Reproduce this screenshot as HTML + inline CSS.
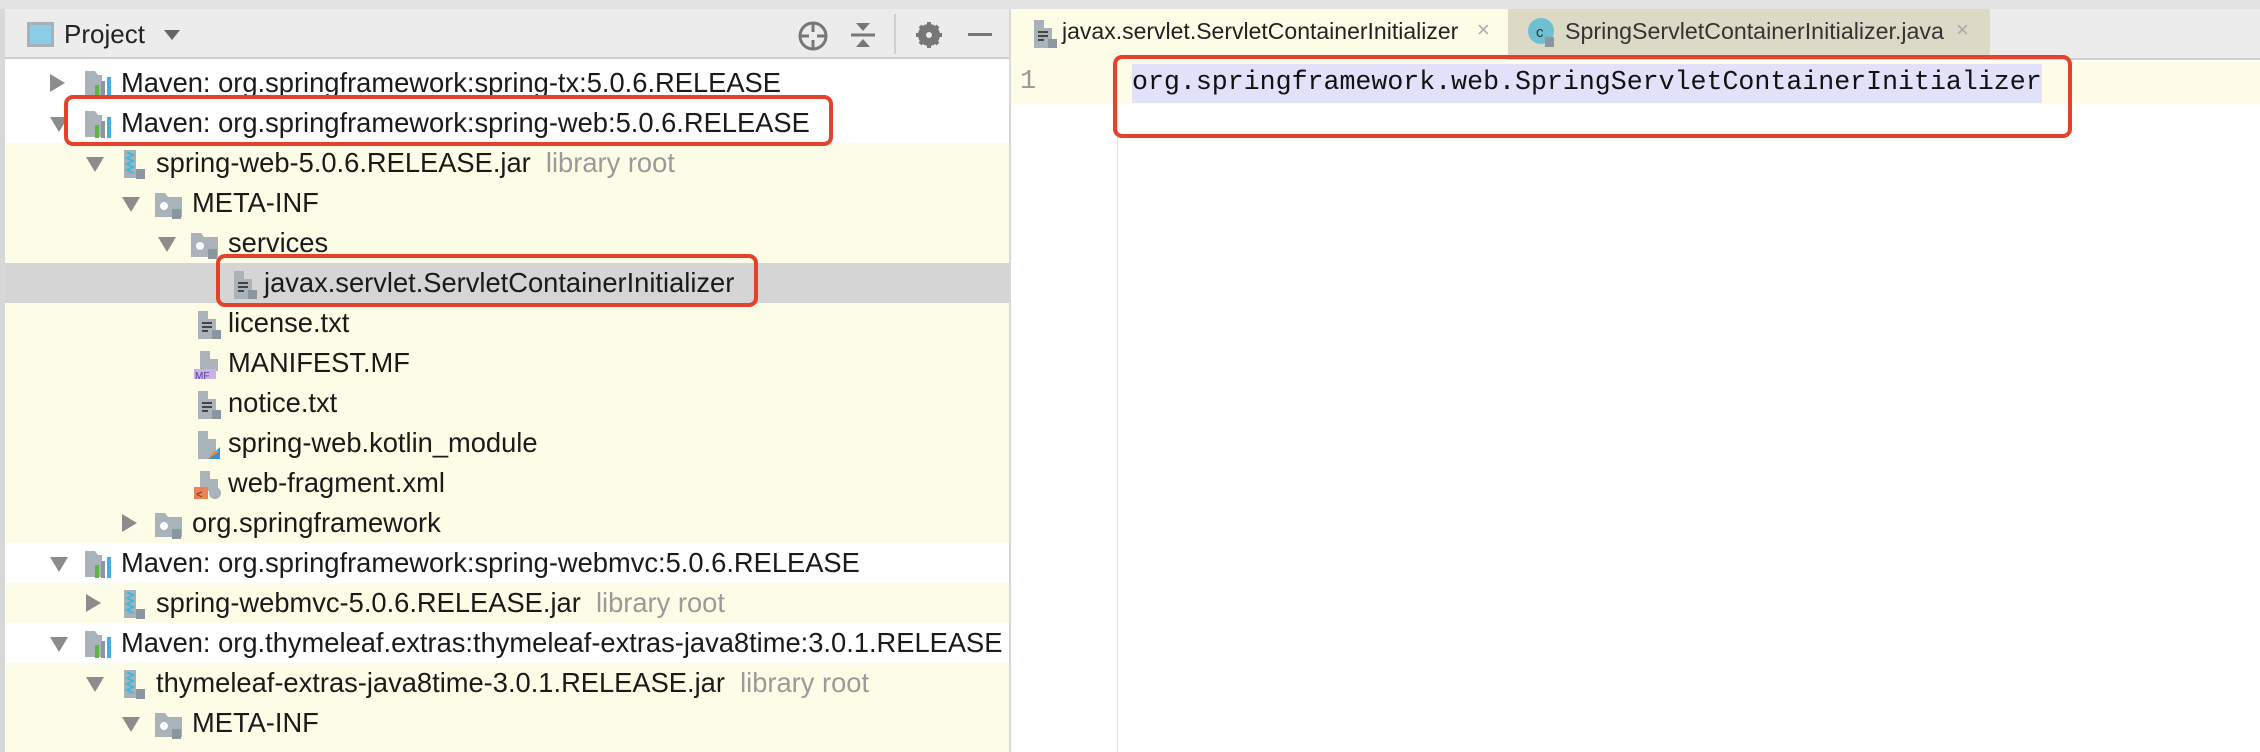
<!DOCTYPE html>
<html><head><meta charset="utf-8">
<style>
*{margin:0;padding:0;box-sizing:border-box}
body{width:2260px;height:752px;overflow:hidden;background:#fff;font-family:"Liberation Sans",sans-serif;position:relative;color:#1a1a1a}
.abs{position:absolute}
.row{position:absolute;left:5px;width:1004px;height:40px}
.y{background:#fdfde7}
.sel{background:#d5d5d5}
.g{color:#9a9a9a}
.arr{position:absolute;width:0;height:0}
.ad{border-left:9px solid transparent;border-right:9px solid transparent;border-top:15px solid #8c8c8c;top:14px}
.ar{border-top:9px solid transparent;border-bottom:9px solid transparent;border-left:15px solid #8c8c8c;top:11px}
.ic{position:absolute;top:6px;width:30px;height:30px}
.red{position:absolute;border:4px solid #e5412b;border-radius:9px}
.tx{position:absolute;font-size:27.3px;white-space:nowrap}
</style></head><body>
<div class="abs" style="left:0;top:0;width:2260px;height:9px;background:#e3e3e3"></div>
<div class="abs" style="left:0;top:9px;width:1009px;height:50px;background:#ececec;border-bottom:2px solid #d0d0d0"></div>
<div class="abs" style="left:0;top:9px;width:5px;height:743px;background:#d8d8d8"></div>
<div class="abs" style="left:27px;top:22px;width:27px;height:25px;background:#8ccce8;border:3px solid #a8b0b8"></div>
<div class="abs" style="left:64px;top:19px;font-size:26px;color:#222">Project</div>
<div class="arr abs" style="left:164px;top:30px;border-left:8px solid transparent;border-right:8px solid transparent;border-top:10px solid #666"></div>
<svg class="abs" style="left:795px;top:18px" width="36" height="36" viewBox="0 0 36 36"><circle cx="18" cy="18" r="13" fill="none" stroke="#777" stroke-width="3"/><path d="M18 5v9M18 22v9M5 18h9M22 18h9" stroke="#777" stroke-width="3"/></svg>
<svg class="abs" style="left:848px;top:20px" width="30" height="30" viewBox="0 0 30 30"><path d="M8 3h14l-7 8z M8 27h14l-7-8z" fill="#777"/><path d="M3 15h24" stroke="#777" stroke-width="3"/></svg>
<div class="abs" style="left:894px;top:14px;width:2px;height:40px;background:#d0d0d0"></div>
<svg class="abs" style="left:914px;top:20px" width="30" height="30" viewBox="0 0 30 30"><circle cx="15" cy="15" r="8" fill="none" stroke="#777" stroke-width="6"/><path d="M15 2v26M2 15h26M6 6l18 18M24 6L6 24" stroke="#777" stroke-width="4"/><circle cx="15" cy="15" r="3" fill="#ececec"/></svg>
<div class="abs" style="left:968px;top:33px;width:24px;height:3px;background:#777"></div>
<div class="abs" style="left:1009px;top:9px;width:2px;height:743px;background:#d8d8d8"></div>

<div class="row" style="top:63px"></div>
<div class="arr ar abs" style="left:50px;top:74px"></div>
<div class="tx" style="left:121px;top:67px">Maven: org.springframework:spring-tx:5.0.6.RELEASE</div>

<div class="row" style="top:103px"></div>
<div class="row y" style="top:143px;height:200px"></div>
<div class="row sel" style="top:263px"></div>
<div class="row y" style="top:303px;height:240px"></div>
<div class="row y" style="top:583px"></div>
<div class="row y" style="top:663px;height:89px"></div>

<svg width="0" height="0" style="position:absolute"><defs>
<g id="mvn"><path d="M2 3h10l3 4h4v22H2z" fill="#aab2ba"/><rect x="12" y="17" width="4" height="13" fill="#5bb548"/><rect x="18" y="13" width="4" height="17" fill="#8a96a0"/><rect x="24" y="9" width="4" height="21" fill="#3fb0e0"/></g>
<g id="jar"><rect x="6" y="1" width="12" height="28" fill="#a8b0b8"/><path d="M9 3l6 3-6 3 6 3-6 3 6 3-6 3 6 3" stroke="#40b8d8" stroke-width="2" fill="none"/><rect x="18" y="20" width="9" height="10" fill="#8a96a0"/></g>
<g id="fold"><path d="M1 4h10l3 4h14v20H1z" fill="#aab2ba"/><circle cx="10" cy="17" r="4" fill="#fff"/><rect x="18" y="20" width="9" height="10" fill="#8a96a0"/></g>
<g id="txt"><path d="M4 2h10v8h8v20H4z" fill="#aab2ba"/><path d="M8 14h10M8 18h10M8 22h6" stroke="#444" stroke-width="2"/><rect x="18" y="21" width="9" height="9" fill="#8a96a0"/></g>
</defs></svg>

<svg class="ic abs" style="left:83px;top:68px"><use href="#mvn"/></svg>
<svg class="ic abs" style="left:83px;top:108px"><use href="#mvn"/></svg>
<div class="arr ad abs" style="left:50px;top:117px"></div>
<div class="tx" style="left:121px;top:107px">Maven: org.springframework:spring-web:5.0.6.RELEASE</div>

<div class="arr ad abs" style="left:86px;top:157px"></div>
<svg class="ic abs" style="left:118px;top:149px"><use href="#jar"/></svg>
<div class="tx" style="left:156px;top:147px">spring-web-5.0.6.RELEASE.jar <span class="g">&nbsp;library root</span></div>

<div class="arr ad abs" style="left:122px;top:197px"></div>
<svg class="ic abs" style="left:154px;top:189px"><use href="#fold"/></svg>
<div class="tx" style="left:192px;top:187px">META-INF</div>

<div class="arr ad abs" style="left:158px;top:237px"></div>
<svg class="ic abs" style="left:190px;top:229px"><use href="#fold"/></svg>
<div class="tx" style="left:228px;top:227px">services</div>

<svg class="ic abs" style="left:230px;top:269px"><use href="#txt"/></svg>
<div class="tx" style="left:264px;top:267px">javax.servlet.ServletContainerInitializer</div>

<svg class="ic abs" style="left:194px;top:309px"><use href="#txt"/></svg>
<div class="tx" style="left:228px;top:307px">license.txt</div>

<svg class="ic abs" style="left:194px;top:349px"><path d="M6 2h10v8h8v12H6z" fill="#aab2ba"/><rect x="0" y="20" width="22" height="11" fill="#c7b3ea"/><text x="1" y="30" font-size="10" font-family="Liberation Sans" fill="#5a3c8c">MF</text></svg>
<div class="tx" style="left:228px;top:347px">MANIFEST.MF</div>

<svg class="ic abs" style="left:194px;top:389px"><use href="#txt"/></svg>
<div class="tx" style="left:228px;top:387px">notice.txt</div>

<svg class="ic abs" style="left:194px;top:429px"><path d="M4 2h10v8h8v20H4z" fill="#aab2ba"/><path d="M14 30l12-12v12z" fill="#3f8fd8"/><path d="M14 30l6-8 6 0z" fill="#f08b2c"/></svg>
<div class="tx" style="left:228px;top:427px">spring-web.kotlin_module</div>

<svg class="ic abs" style="left:194px;top:469px"><path d="M6 2h10v8h8v12H6z" fill="#aab2ba"/><rect x="0" y="18" width="14" height="12" fill="#f08050"/><text x="2" y="29" font-size="11" fill="#333">&lt;</text><circle cx="21" cy="24" r="6" fill="#aab2ba"/></svg>
<div class="tx" style="left:228px;top:467px">web-fragment.xml</div>

<div class="arr ar abs" style="left:122px;top:514px"></div>
<svg class="ic abs" style="left:154px;top:509px"><use href="#fold"/></svg>
<div class="tx" style="left:192px;top:507px">org.springframework</div>

<div class="arr ad abs" style="left:50px;top:557px"></div>
<svg class="ic abs" style="left:83px;top:548px"><use href="#mvn"/></svg>
<div class="tx" style="left:121px;top:547px">Maven: org.springframework:spring-webmvc:5.0.6.RELEASE</div>

<div class="arr ar abs" style="left:86px;top:594px"></div>
<svg class="ic abs" style="left:118px;top:589px"><use href="#jar"/></svg>
<div class="tx" style="left:156px;top:587px">spring-webmvc-5.0.6.RELEASE.jar <span class="g">&nbsp;library root</span></div>

<div class="arr ad abs" style="left:50px;top:637px"></div>
<svg class="ic abs" style="left:83px;top:628px"><use href="#mvn"/></svg>
<div class="tx" style="left:121px;top:627px">Maven: org.thymeleaf.extras:thymeleaf-extras-java8time:3.0.1.RELEASE</div>

<div class="arr ad abs" style="left:86px;top:677px"></div>
<svg class="ic abs" style="left:118px;top:669px"><use href="#jar"/></svg>
<div class="tx" style="left:156px;top:667px">thymeleaf-extras-java8time-3.0.1.RELEASE.jar <span class="g">&nbsp;library root</span></div>

<div class="arr ad abs" style="left:122px;top:717px"></div>
<svg class="ic abs" style="left:154px;top:709px"><use href="#fold"/></svg>
<div class="tx" style="left:192px;top:707px">META-INF</div>

<!-- editor -->
<div class="abs" style="left:1011px;top:9px;width:1249px;height:51px;background:#ececec;border-bottom:2px solid #d0d0d0"></div>
<div class="abs" style="left:1011px;top:9px;width:497px;height:53px;background:#fdfde7"></div>
<svg class="abs" style="left:1030px;top:18px" width="30" height="30"><use href="#txt"/></svg>
<div class="abs" style="left:1062px;top:18px;font-size:23px;color:#222">javax.servlet.ServletContainerInitializer</div>
<div class="abs" style="left:1477px;top:17px;font-size:22px;color:#aaa">×</div>
<div class="abs" style="left:1508px;top:9px;width:482px;height:51px;background:#dcd9c6"></div>
<svg class="abs" style="left:1527px;top:17px" width="32" height="32"><circle cx="14" cy="14" r="13" fill="#6cc0d4"/><text x="9" y="20" font-size="15" font-family="Liberation Sans" fill="#333">c</text><rect x="18" y="20" width="9" height="10" fill="#8a96a0"/></svg>
<div class="abs" style="left:1565px;top:18px;font-size:23.2px;color:#333">SpringServletContainerInitializer.java</div>
<div class="abs" style="left:1956px;top:17px;font-size:22px;color:#aaa">×</div>

<div class="abs" style="left:1011px;top:62px;width:1249px;height:42px;background:#fefbe6"></div>
<div class="abs" style="left:1117px;top:62px;width:1px;height:690px;background:#e4e4e4"></div>
<div class="abs" style="left:1011px;top:104px;width:106px;height:648px;background:#fff"></div>
<div class="abs" style="left:1020px;top:67px;font-family:'Liberation Mono',monospace;font-size:27px;color:#999">1</div>
<div class="abs" style="left:1132px;top:64px;height:39px;padding-top:3px;background:#e1e1fa;font-family:'Liberation Mono',monospace;font-size:26.6px;color:#111">org.springframework.web.SpringServletContainerInitializer</div>

<div class="red" style="left:64px;top:95px;width:769px;height:51px"></div>
<div class="red" style="left:216px;top:254px;width:542px;height:53px"></div>
<div class="red" style="left:1113px;top:55px;width:959px;height:83px"></div>
</body></html>
